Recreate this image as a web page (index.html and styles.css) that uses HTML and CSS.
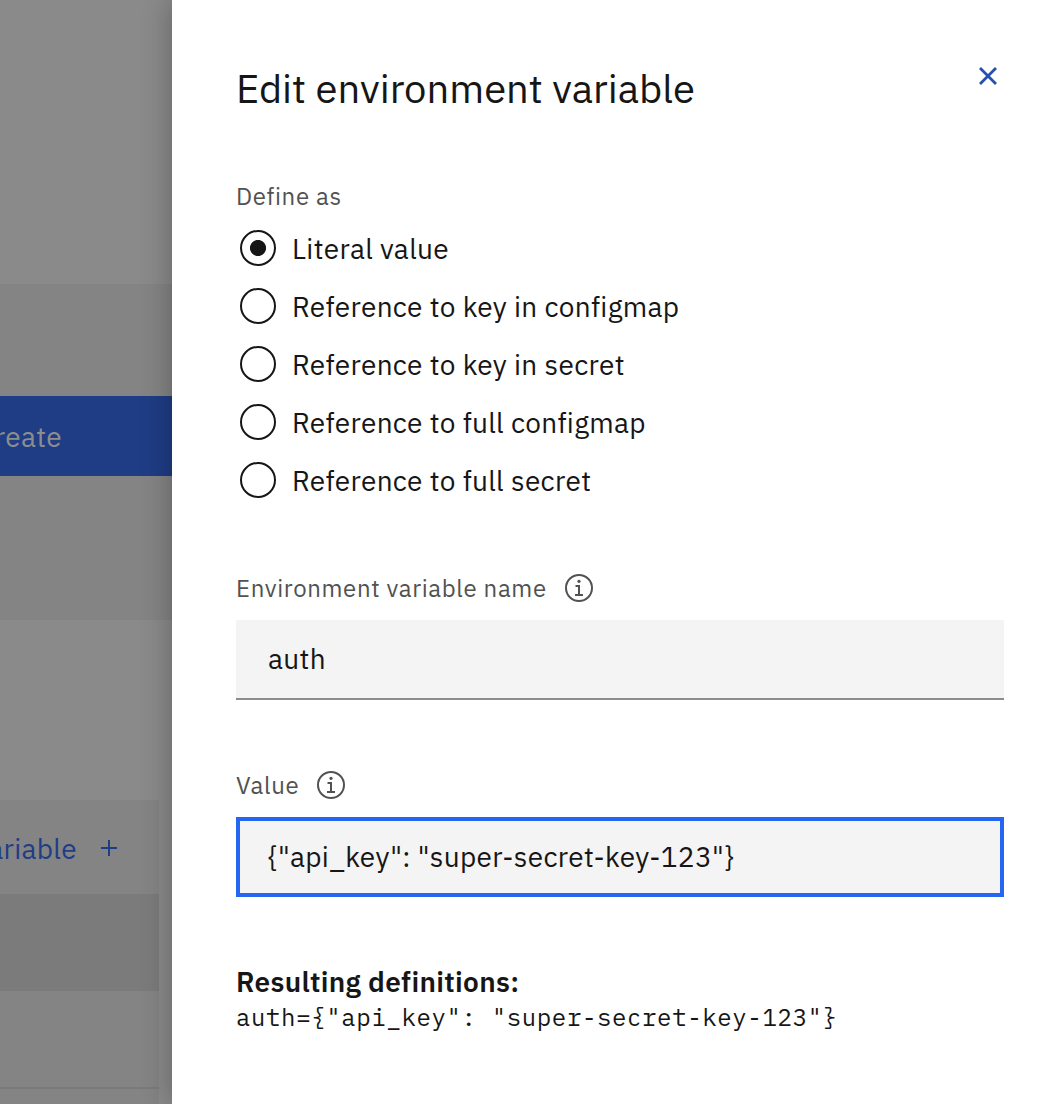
FILE: index.html
```
<!DOCTYPE html>
<html lang="en">
<head>
<meta charset="utf-8">
<title>Edit environment variable</title>
<link rel="stylesheet" href="styles.css">
</head>
<body>
<div class="page">
  <div class="backdrop">
    <div class="band band-top"></div>
    <div class="band band-actions">
      <div class="create"><span>Create</span></div>
    </div>
    <div class="band band-gap"></div>
    <div class="table">
      <div class="add"><span>Add variable</span>
        <svg class="plus" viewBox="0 0 16 16"><path d="M8 0v16M0 8h16"/></svg>
      </div>
      <div class="table-head"></div>
      <div class="table-row"></div>
    </div>
  </div>
  <main class="panel">
    <header class="header">
      <h1 class="title">Edit environment variable</h1>
      <button class="close" aria-label="Close"><svg viewBox="0 0 20 20"><path d="M2 2l16 16M18 2L2 18"/></svg></button>
    </header>
    <div class="label"><span>Define as</span></div>
    <div class="radios">
      <div class="radio"><i class="dot dot-on"></i><span>Literal value</span></div>
      <div class="radio"><i class="dot"></i><span>Reference to key in configmap</span></div>
      <div class="radio"><i class="dot"></i><span>Reference to key in secret</span></div>
      <div class="radio"><i class="dot"></i><span>Reference to full configmap</span></div>
      <div class="radio"><i class="dot"></i><span>Reference to full secret</span></div>
    </div>
    <div class="label name-label"><span>Environment variable name</span>
      <svg class="info" viewBox="0 0 28 28"><circle cx="14" cy="14" r="13"/><path d="M10.500 12h3.500v9M10 21h8"/><circle class="fill" cx="14" cy="7.300" r="1.600"/></svg>
    </div>
    <div class="field"><span>auth</span></div>
    <div class="label value-label"><span>Value</span>
      <svg class="info" viewBox="0 0 28 28"><circle cx="14" cy="14" r="13"/><path d="M10.500 12h3.500v9M10 21h8"/><circle class="fill" cx="14" cy="7.300" r="1.600"/></svg>
    </div>
    <div class="field focused"><span>{"api_key": "super-secret-key-123"}</span></div>
    <h2 class="result-title">Resulting definitions:</h2>
    <code class="result">auth={"api_key": "super-secret-key-123"}</code>
  </main>
</div>
</body>
</html>
```
FILE: styles.css
```
* { box-sizing: border-box; }
body {
  margin: 0;
  font-family: "IBM Plex Sans", "Open Sans", sans-serif;
  font-size: 28px;
  letter-spacing: .32px;
  color: #161616;
  background: #fff;
  -webkit-font-smoothing: antialiased;
}
.page { display: flex; width: 1056px; height: 1104px; overflow: hidden; }

.backdrop { width: 172px; flex: none; display: flex; flex-direction: column; background: #8a8a8a; white-space: nowrap; }
.band-top { height: 284px; }
.band-actions { height: 336px; padding-top: 112px; background: #848484; }
.create { height: 80px; padding-right: 110px; display: flex; align-items: center; justify-content: flex-end; background: #1f3d85; color: #8d8d8d; }
.band-gap { height: 180px; }
.table { width: 159px; flex: 1; display: flex; flex-direction: column; background: #848484; }
.add { height: 94px; padding: 2px 42px 0 0; display: flex; align-items: center; justify-content: flex-end; gap: 24px; color: #1f3d85; }
.plus { width: 16px; height: 16px; flex: none; fill: none; stroke: #1f3d85; stroke-width: 2; }
.table-head { height: 97px; background: #7b7b7b; }
.table-row { height: 98px; border-bottom: 2px solid #7a7a7a; }

.panel {
  position: relative;
  width: 884px;
  padding: 0 52px 0 64px;
  display: flex;
  flex-direction: column;
  background: #fff;
  box-shadow: 0 0 28px rgba(0, 0, 0, .3);
  white-space: nowrap;
}
.header { display: flex; justify-content: space-between; height: 181px; padding-top: 60px; }
.title { margin: 0; font-size: 40px; line-height: 56px; font-weight: 400; letter-spacing: 0; }
.close { width: 32px; height: 32px; padding: 6px; border: 0; background: none; }
.close svg { display: block; width: 20px; height: 20px; fill: none; stroke: #2450b0; stroke-width: 2.8; }
.label { display: flex; align-items: center; font-size: 24px; line-height: 30px; height: 30px; color: #525252; letter-spacing: .64px; }
.radios { display: flex; flex-direction: column; gap: 22px; margin-top: 19px; }
.radio { display: flex; align-items: center; gap: 16px; height: 36px; padding-left: 4px; }
.dot { width: 36px; height: 36px; flex: none; border: 2px solid #161616; border-radius: 50%; }
.dot-on { background: radial-gradient(circle, #161616 7.600px, transparent 8.400px); }
.name-label { margin-top: 75px; }
.info { width: 28px; height: 28px; margin-left: 18px; fill: none; stroke: #525252; stroke-width: 2; }
.info .fill { fill: #525252; stroke: none; }
.field { height: 80px; margin-top: 17px; padding: 0 0 2px 32px; display: flex; align-items: center; background: #f4f4f4; border-bottom: 2px solid #8d8d8d; }
.value-label { margin-top: 70px; }
.focused { border: 4px solid #2466f2; padding-left: 28px; }
.result-title { margin: 65px 0 0; font-size: 28px; line-height: 40px; font-weight: 600; }
.result { font-family: "IBM Plex Mono", "Liberation Mono", monospace; font-size: 24px; line-height: 30px; letter-spacing: .64px; }
```
